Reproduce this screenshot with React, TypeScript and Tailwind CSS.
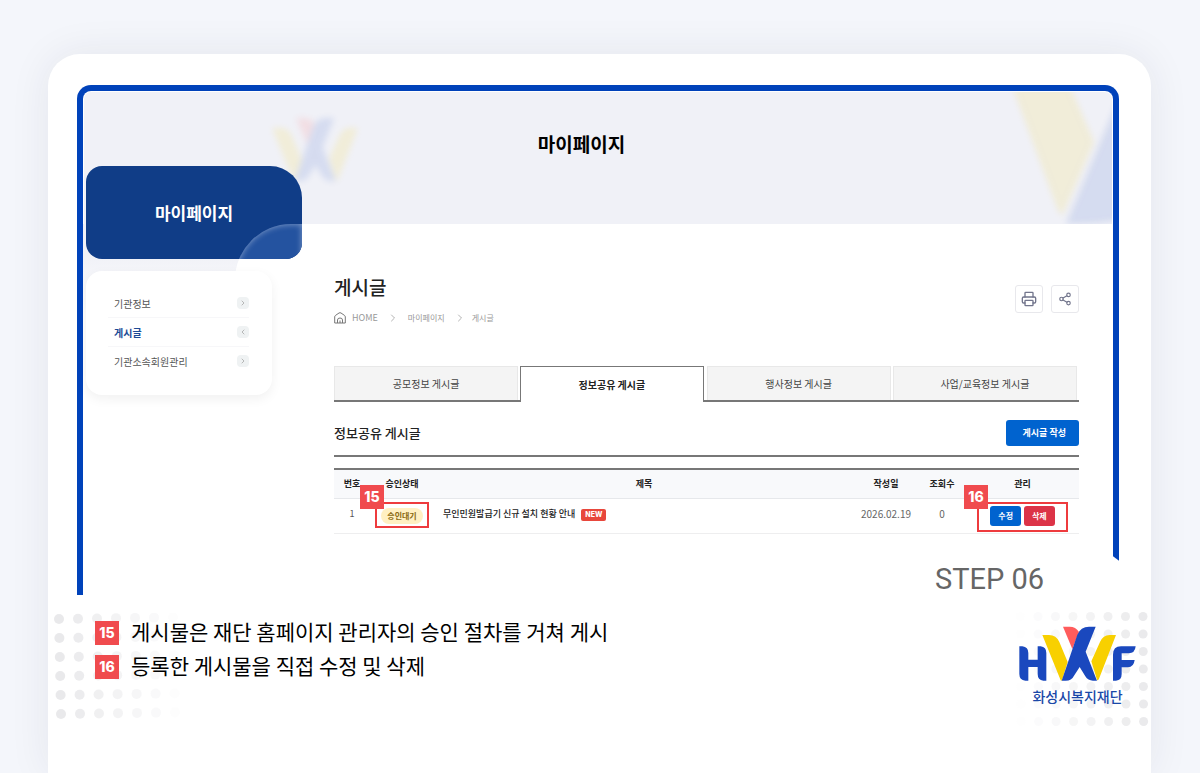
import { ChevronLeft, ChevronRight, Printer, Share2 } from "lucide-react";

const menu = [
  { label: "기관정보", active: false },
  { label: "게시글", active: true },
  { label: "기관소속회원관리", active: false },
];

const tabs = ["공모정보 게시글", "정보공유 게시글", "행사정보 게시글", "사업/교육정보 게시글"];

const notes = [
  { no: "15", text: "게시물은 재단 홈페이지 관리자의 승인 절차를 거쳐 게시" },
  { no: "16", text: "등록한 게시물을 직접 수정 및 삭제" },
];

function WMark() {
  return (
    <g>
      <path d="M246 107H266Q288 107 297 128L322 188L306 240Q304 247 301 243Z" fill="#f8d000" />
      <path d="M467 107H448Q428 107 419 128L393 186L410 241Q412 246 416 238Z" fill="#f8d000" />
      <path d="M308 82H328Q346 82 356 98L336 149Z" fill="#ff5c5c" />
      <path
        d="M406 82H386Q361 82 351 106L304 244H316Q334 244 341 229L358 203L375 231Q383 244 398 244H410L376 157Z"
        fill="#1a48be"
      />
    </g>
  );
}

function Logo() {
  return (
    <svg viewBox="176 80 351 168" className="h-14 w-[117px]" aria-hidden="true">
      <path
        d="M177 141H186Q204 143 204 161V181H232V141H241Q258 143 258 161V244H249Q232 242 232 224V203H204V244H195Q177 242 177 224Z"
        fill="#1a48be"
      />
      <WMark />
      <path
        d="M526 141Q524 162 505 162H484V182H523Q520 204 503 204H484V224Q484 243 467 244H458V166Q458 141 482 141Z"
        fill="#1a48be"
      />
    </svg>
  );
}

function Dots({ cols, rows, step, r, drift, flip }: { cols: number; rows: number; step: number; r: number; drift: number; flip?: boolean }) {
  const items = [];
  for (let y = 0; y < rows; y++) {
    for (let x = 0; x < cols; x++) {
      const fade = flip ? (x + 0.3) / cols : 1 - (x + 0.3) / cols;
      items.push(
        <circle key={`${x}-${y}`} cx={r + x * step + y * drift} cy={r + 1 + y * step - (flip ? 0 : x * drift * 0.7)} r={r} fill="#e8e8ea" opacity={fade} />
      );
    }
  }
  return (
    <svg width={cols * step} height={rows * step} className="block" aria-hidden="true">
      {items}
    </svg>
  );
}

function Marker({ no }: { no: string }) {
  return (
    <span className="flex size-6 shrink-0 items-center justify-center bg-[#f04b4e] font-['Inter'] text-sm font-extrabold text-white">
      {no}
    </span>
  );
}

export default function App() {
  return (
    <div className="flex min-h-screen flex-col bg-[#f4f6fb] pt-[54px] font-['Noto_Sans_CJK_KR',sans-serif] text-[#222]">
      <div className="relative ml-12 mr-[49px] flex-1 rounded-t-[32px] bg-white pt-[31px] shadow-[0_0_40px_rgba(40,40,60,0.08)]">
        <section className="relative ml-[29px] mr-8 rounded-t-[14px] border-x-[6px] border-t-[6px] border-[#0042ba]">
          <header className="relative mx-px mt-px flex h-[132px] items-start justify-center overflow-hidden rounded-t-[7px] bg-[#f0f1f7] pt-[38px]">
            <svg viewBox="246 82 221 164" className="absolute left-[188px] top-[26px] h-16 w-[86px] overflow-visible opacity-12 blur-[3px]" aria-hidden="true">
              <WMark />
            </svg>
            <svg viewBox="0 0 112 132" className="absolute right-0 top-0 h-[132px] w-28 overflow-visible opacity-12 blur-[3px]" aria-hidden="true">
              <path d="M12 -6H70L94 50L63 122Q60 124 57 116Z" fill="#f8d000" />
              <path d="M118 8V128Q100 132 66 132Z" fill="#1a48be" />
            </svg>
            <h1 className="mr-[33px] text-[19px] font-bold leading-7 text-black">마이페이지</h1>
          </header>

          <div className="relative flex gap-8 bg-[linear-gradient(to_bottom,#f0f1f7_0,#f0f1f7_30px,#ffffff_90px)] pr-[34px]">
            <div className="absolute inset-y-0 left-[152px] right-0 rounded-tl-[56px] bg-white" />

            <aside className="relative -mt-[58px] w-[219px] shrink-0 pl-[3px]">
              <div className="relative flex h-[93px] items-center justify-center overflow-hidden rounded-[16px] rounded-tr-[32px] bg-[#103d87]">
                <div className="absolute left-[149px] right-0 top-[58px] h-16 rounded-tl-[56px] bg-[#2453a0] shadow-[inset_0_0_6px_rgba(255,255,255,0.45)]" />
                <h2 className="relative text-[17px] font-bold leading-6 text-white">마이페이지</h2>
              </div>
              <nav className="mr-[30px] mt-3 h-[124px] rounded-[16px] bg-white pl-[22px] pr-[23px] pt-[18px] shadow-[0_4px_12px_rgba(0,0,0,0.06)]">
                <ul>
                  {menu.map((item) => (
                    <li key={item.label} className="border-b border-[#f7f7f9] last:border-b-0">
                      <a
                        href="#"
                        className={`flex h-7 items-center justify-between pl-[6px] text-[10px] ${item.active ? "font-bold text-[#1d4b96]" : "text-[#555]"}`}
                      >
                        {item.label}
                        <span className="flex size-3 items-center justify-center rounded-sm bg-[#eff2f3] text-[#999]">
                          {item.active ? <ChevronLeft size={8} /> : <ChevronRight size={8} />}
                        </span>
                      </a>
                    </li>
                  ))}
                </ul>
              </nav>
            </aside>

            <main className="relative min-w-0 flex-1 pt-[49px]">
              <div className="flex items-start justify-between">
                <div>
                  <h2 className="text-[19px] font-medium leading-7 text-[#222]">게시글</h2>
                  <nav className="mt-[9px] flex h-4 items-center text-[8px] text-[#999]">
                    <svg viewBox="0 0 12 12" className="mr-[6px] size-3" fill="none" stroke="#777" aria-hidden="true">
                      <path d="M.7 11V5Q.7 4 1.5 3.4L5 1Q6 .4 7 1L10.500 3.400Q11.300 4 11.300 5V11Z" />
                      <path d="M3.500 11V8Q3.500 6 6 6T8.500 8V11M6 8.500V11" />
                    </svg>
                    <a href="#" className="text-[9px]">HOME</a>
                    <ChevronRight size={12} strokeWidth={1.5} className="mx-[9px]" />
                    <a href="#">마이페이지</a>
                    <ChevronRight size={12} strokeWidth={1.5} className="ml-[9px] mr-[6px]" />
                    <a href="#">게시글</a>
                  </nav>
                </div>
                <div className="mt-3 flex gap-2">
                  <button aria-label="인쇄" className="flex size-7 items-center justify-center rounded-[3px] border border-[#e8e8ec] bg-white text-[#72758c]">
                    <Printer size={16} />
                  </button>
                  <button aria-label="공유" className="flex size-7 items-center justify-center rounded-[3px] border border-[#e8e8ec] bg-white text-[#72758c]">
                    <Share2 size={14} />
                  </button>
                </div>
              </div>

              <ul className="mt-10 grid h-9 grid-cols-4">
                {tabs.map((tab, i) =>
                  i === 1 ? (
                    <li key={tab} className="flex items-end">
                      <button className="h-full flex-1 border-x border-t border-[#777] bg-white pb-px text-[10px] font-bold text-[#222]">{tab}</button>
                      <span className="w-[3px] border-b-2 border-[#777]" />
                    </li>
                  ) : (
                    <li key={tab} className="border-b-2 border-[#777] pr-[2px]">
                      <button className="h-full w-full border-x border-t border-[#e8e8e8] bg-[#f4f4f4] text-[10px] text-[#444]">{tab}</button>
                    </li>
                  )
                )}
              </ul>

              <div className="flex items-center justify-between border-b-2 border-[#777] pb-[9px] pt-[18px]">
                <h3 className="text-[13px] font-medium leading-[26px]">정보공유 게시글</h3>
                <button className="h-[26px] rounded-[3px] bg-[#0063cf] pl-[17px] pr-[13px] text-[9px] font-bold text-white">게시글 작성</button>
              </div>

              <table className="mt-[11px] w-full table-fixed border-collapse text-[9px]">
                <colgroup>
                  <col className="w-9" />
                  <col className="w-16" />
                  <col />
                  <col className="w-16" />
                  <col className="w-12" />
                  <col className="w-[113px]" />
                </colgroup>
                <thead>
                  <tr className="h-[29px] border-b border-t-2 border-b-[#e6e8eb] border-t-[#777] bg-[#f8f9fb]">
                    {["번호", "승인상태", "제목", "작성일", "조회수", "관리"].map((h) => (
                      <th key={h} scope="col" className="p-0 font-bold">{h}</th>
                    ))}
                  </tr>
                </thead>
                <tbody>
                  <tr className="h-[35px] border-b border-[#eeeeef] text-center">
                    <td className="p-0 pb-1 text-[#555]">1</td>
                    <td className="relative p-0">
                      <span className="inline-block rounded-full bg-[#fff0c2] px-[6px] text-[8px] font-bold leading-4 text-[#8a6a10]">승인대기</span>
                      <span className="absolute left-[5px] top-[3px] h-[26px] w-[54px] border-2 border-[#ee3b3e]" />
                      <span className="absolute -left-[10px] -top-[14px]"><Marker no="15" /></span>
                    </td>
                    <td className="p-0 pb-1 pl-[9px] text-left">
                      <a href="#" className="font-medium">무인민원발급기 신규 설치 현황 안내</a>
                      <span className="ml-[6px] inline-block rounded-xs bg-[#e8473c] px-1 font-['Inter'] text-[7px] font-extrabold leading-3 text-white">NEW</span>
                    </td>
                    <td className="p-0 pb-1 text-[10px] text-[#666]">2026.02.19</td>
                    <td className="p-0 pb-1 text-[10px] text-[#666]">0</td>
                    <td className="relative p-0">
                      <div className="flex justify-center gap-[3px]">
                        <button className="h-5 rounded-[3px] bg-[#0063cf] px-2 text-[8px] font-bold text-white">수정</button>
                        <button className="h-5 rounded-[3px] bg-[#dc3347] px-2 text-[8px] font-bold text-white">삭제</button>
                      </div>
                      <span className="absolute left-[11px] top-[3px] h-[30px] w-[91px] border-2 border-[#ee3b3e]" />
                      <span className="absolute -left-[2px] -top-[14px]"><Marker no="16" /></span>
                    </td>
                  </tr>
                </tbody>
              </table>
              <p className="mr-[35px] mt-[30px] text-right font-['Roboto'] text-[29px] leading-[31px] text-[#666]">STEP 06</p>
            </main>
          </div>
          <span className="absolute -bottom-px -right-[7px] h-10 w-2 bg-white [clip-path:polygon(0_0,100%_6px,100%_100%,0_100%)]" />
        </section>

        <footer className="relative flex items-start justify-between pl-[47px] pr-[15px] pt-[26px]">
          <div className="absolute left-[6px] top-[18px]">
            <Dots cols={7} rows={6} step={19} r={5} drift={0.4} />
          </div>
          <div className="absolute -right-[5px] top-4 [clip-path:inset(0_5px_0_0)]">
            <Dots cols={8} rows={7} step={17.5} r={4.5} drift={0.1} flip />
          </div>
          <ul className="relative flex flex-col gap-[10px]">
            {notes.map((n) => (
              <li key={n.no} className="flex h-6 items-start gap-3">
                <Marker no={n.no} />
                <span className="text-[21px] leading-5 text-black">{n.text}</span>
              </li>
            ))}
          </ul>
          <div className="relative mt-[5px] flex flex-col items-center">
            <Logo />
            <p className="mt-1 text-[14px] font-medium leading-5 text-[#1a48a8]">화성시복지재단</p>
          </div>
        </footer>
      </div>
    </div>
  );
}
